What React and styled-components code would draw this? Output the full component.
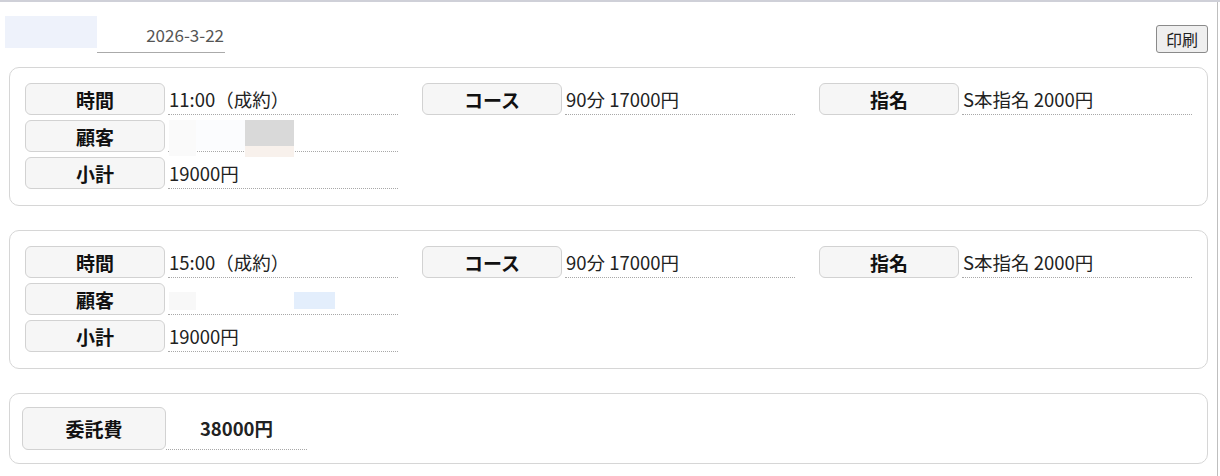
import React from "react";
import styled, { createGlobalStyle } from "styled-components";

const GlobalStyle = createGlobalStyle`
  html, body {
    margin: 0;
    background: #fff;
  }
  body {
    font-family: "Noto Sans CJK JP", "Noto Sans", sans-serif;
    color: #222;
  }
`;

const Page = styled.div`
  position: relative;
  height: 476px;
  box-sizing: border-box;
  padding: 14px 12px 0 9px;
  border-top: 2px solid #cfd0d8;
  overflow: hidden;

  &::after {
    content: "";
    position: absolute;
    top: 0;
    right: 2px;
    width: 1px;
    height: 100%;
    background: #bfbfbf;
  }
`;

const Header = styled.div`
  display: flex;
  align-items: flex-start;
  height: 38px;
  margin-left: -4px;
`;

const NameBox = styled.div`
  width: 92px;
  height: 32px;
  background: #eef2fb;
`;

const DateField = styled.div`
  width: 128px;
  height: 37px;
  box-sizing: border-box;
  border-bottom: 1px solid #aaa;
  display: flex;
  align-items: center;
  justify-content: flex-end;
  padding-right: 1px;
  font-size: 17px;
  color: #555;
`;

const PrintButton = styled.button`
  margin-left: auto;
  margin-top: 9px;
  width: 52px;
  height: 28px;
  border: 1px solid #8a8a8a;
  border-radius: 3px;
  background: #efefef;
  font-family: inherit;
  font-size: 16px;
  line-height: 1;
  color: #222;
  padding: 0;
`;

const Card = styled.div`
  border: 1px solid #d6d6d6;
  border-radius: 10px;
  padding: ${(p) => p.$pad || "15px 15px 16px"};
  margin-top: ${(p) => p.$mt || "0"};
  display: flex;
  flex-direction: column;
  gap: 5px;
`;

const Row = styled.div`
  display: flex;
  gap: 24px;
`;

const Field = styled.div`
  display: flex;
  gap: ${(p) => p.$gap || "3px"};
`;

const Label = styled.div`
  width: ${(p) => p.$w || "140px"};
  height: ${(p) => p.$h || "32px"};
  box-sizing: border-box;
  border: 1px solid #d2d2d2;
  border-radius: 6px;
  background: #f6f6f6;
  display: flex;
  align-items: center;
  justify-content: center;
  font-weight: 700;
  font-size: 19px;
  color: #111;
`;

const Value = styled.div`
  width: ${(p) => p.$w || "230px"};
  height: ${(p) => p.$h || "32px"};
  box-sizing: border-box;
  border-bottom: 1px dotted #a8a8a8;
  display: flex;
  align-items: center;
  justify-content: ${(p) => (p.$center ? "center" : "flex-start")};
  padding-left: ${(p) => (p.$center ? "0" : "1px")};
  font-size: 18.5px;
  font-weight: ${(p) => (p.$bold ? 700 : 400)};
  color: #222;
  white-space: nowrap;
`;

const Masked = styled.div`
  display: flex;
  align-items: flex-start;
  height: 100%;
  background: #fff;
  margin-bottom: -1px;
`;

const Blur = styled.div`
  width: ${(p) => p.$w}px;
  height: ${(p) => p.$h}px;
  margin-left: ${(p) => p.$ml || 0}px;
  margin-top: ${(p) => p.$mt || 0}px;
  background: ${(p) => p.$bg};
`;

const GrayStack = styled.div`
  display: flex;
  flex-direction: column;
`;

const Customer1 = () => (
  <Value style={{ alignItems: "flex-start" }}>
    <Masked style={{ width: "184px" }}>
      <Blur $w={27} $h={36} $bg="#fafafa" />
      <Blur $w={49} $h={30} $bg="#fbfcfe" />
      <GrayStack>
        <Blur $w={49} $h={26} $bg="#d9d9d9" />
        <Blur $w={49} $h={11} $bg="#f8f1ec" />
      </GrayStack>
    </Masked>
  </Value>
);

const Customer2 = () => (
  <Value style={{ alignItems: "flex-start" }}>
    <Blur $w={27} $h={18} $mt={9} $bg="#f8f8f8" />
    <Blur $w={41} $h={17} $mt={9} $ml={98} $bg="#e3eefc" />
  </Value>
);

function Session({ time, customer, mt }) {
  return (
    <Card $mt={mt}>
      <Row>
        <Field>
          <Label>時間</Label>
          <Value>{time}</Value>
        </Field>
        <Field>
          <Label>コース</Label>
          <Value>90分 17000円</Value>
        </Field>
        <Field>
          <Label>指名</Label>
          <Value>S本指名 2000円</Value>
        </Field>
      </Row>
      <Row>
        <Field>
          <Label>顧客</Label>
          {customer}
        </Field>
      </Row>
      <Row>
        <Field>
          <Label>小計</Label>
          <Value>19000円</Value>
        </Field>
      </Row>
    </Card>
  );
}

export default function App() {
  return (
    <>
      <GlobalStyle />
      <Page>
        <Header>
          <NameBox />
          <DateField>2026-3-22</DateField>
          <PrintButton>印刷</PrintButton>
        </Header>
        <Session time="11:00（成約）" customer={<Customer1 />} mt="13px" />
        <Session time="15:00（成約）" customer={<Customer2 />} mt="24px" />
        <Card $mt="24px" $pad="13px 12px 13px">
          <Row>
            <Field $gap="0px">
              <Label $w="144px" $h="43px">委託費</Label>
              <Value $w="141px" $h="43px" $center $bold>
                38000円
              </Value>
            </Field>
          </Row>
        </Card>
      </Page>
    </>
  );
}
